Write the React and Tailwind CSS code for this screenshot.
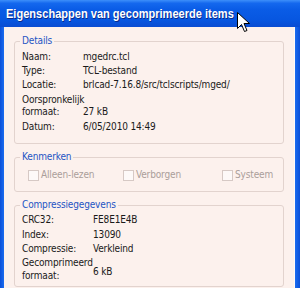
export default function App() {
  const font = { fontFamily: '"DejaVu Sans Condensed", "Liberation Sans", Arial, sans-serif' };
  const titleFont = { fontFamily: '"Liberation Sans", Arial, sans-serif' };
  return (
    <div className="relative w-[300px] h-[288px] overflow-hidden bg-[#0a5ce6]" style={font}>
      {/* Title bar */}
      <div className="h-[27px] flex items-center pl-[6px] bg-[linear-gradient(180deg,#3d8ffa_0%,#1468ee_12%,#0a5ce6_35%,#0756e0_75%,#0a4cd2_100%)]">
        <span className="origin-left scale-x-[0.85] text-white font-bold text-[13px] [text-shadow:1px_1px_0_#0a2a8a] whitespace-nowrap" style={titleFont}>
          Eigenschappen van gecomprimeerde items
        </span>
      </div>
      {/* Body */}
      <div className="flex h-[261px]">
        <div className="w-[4px] bg-[linear-gradient(90deg,#0a4fd8,#1a6cf0)]" />
        <div className="flex-1 bg-[#fcf1ed] pl-[10px] pr-[10px] pt-[14px] flex flex-col text-[10px] tracking-[-0.15px] text-[#1a1a1a] leading-[14px]">
          {/* Details */}
          <div className="relative border border-[#e2d3ce] rounded-[3px] h-[103px] pt-[8px] pl-[7px] flex flex-col">
            <span className="absolute left-[5px] top-[-8px] px-[2px] bg-[#fcf1ed] text-[#2454c4]">Details</span>
            <div className="flex h-[14px]"><span className="w-[61px]">Naam:</span><span>mgedrc.tcl</span></div>
            <div className="flex h-[14px]"><span className="w-[61px]">Type:</span><span>TCL-bestand</span></div>
            <div className="flex h-[14px]"><span className="w-[61px]">Locatie:</span><span className="whitespace-nowrap">brlcad-7.16.8/src/tclscripts/mged/</span></div>
            <div className="flex mt-[2px] h-[23px] items-end">
              <span className="w-[61px] leading-[11.5px]">Oorspronkelijk<br />formaat:</span>
              <span className="leading-[11.5px]">27 kB</span>
            </div>
            <div className="flex h-[14px] mt-[3px]"><span className="w-[61px]">Datum:</span><span>6/05/2010 14:49</span></div>
          </div>
          {/* Kenmerken */}
          <div className="relative mt-[13px] border border-[#e2d3ce] rounded-[3px] h-[35px] flex items-center pl-[13px] text-[#aa9e9a]">
            <span className="absolute left-[5px] top-[-8px] px-[2px] bg-[#fcf1ed] text-[#2454c4]">Kenmerken</span>
            <div className="flex items-center w-[95px] mt-[1px]">
              <span className="w-[11px] h-[11px] border border-[#d6c9c5] bg-[#fdf9f8] mr-[2px]" />
              <span>Alleen-lezen</span>
            </div>
            <div className="flex items-center w-[99px] mt-[1px]">
              <span className="w-[11px] h-[11px] border border-[#d6c9c5] bg-[#fdf9f8] mr-[2px]" />
              <span>Verborgen</span>
            </div>
            <div className="flex items-center mt-[1px]">
              <span className="w-[11px] h-[11px] border border-[#d6c9c5] bg-[#fdf9f8] mr-[2px]" />
              <span>Systeem</span>
            </div>
          </div>
          {/* Compressiegegevens */}
          <div className="relative mt-[13px] border border-[#e2d3ce] rounded-[3px] h-[82px] pt-[7px] pl-[7px] flex flex-col">
            <span className="absolute left-[5px] top-[-8px] px-[2px] bg-[#fcf1ed] text-[#2454c4]">Compressiegegevens</span>
            <div className="flex h-[14px]"><span className="w-[71px]">CRC32:</span><span>FE8E1E4B</span></div>
            <div className="flex h-[14px] mt-[1px]"><span className="w-[71px]">Index:</span><span>13090</span></div>
            <div className="flex h-[14px]"><span className="w-[71px]">Compressie:</span><span>Verkleind</span></div>
            <div className="flex h-[26px] items-center">
              <span className="w-[71px] leading-[13px]">Gecomprimeerd<br />formaat:</span>
              <span className="mt-[5px]">6 kB</span>
            </div>
          </div>
        </div>
        <div className="w-[1px] bg-[#fffaf8]" />
        <div className="w-[5px] bg-[linear-gradient(90deg,#1a6cf0,#0a4fd8)]" />
      </div>
      {/* Mouse cursor */}
      <svg className="absolute left-[237px] top-[12px]" width="13" height="21" viewBox="0 0 13 21">
        <path d="M0.5 0.5 L0.5 16.5 L4.5 12.5 L7.5 19.5 L10 18.5 L7 11.5 L12.5 11.5 Z" fill="#ffffff" stroke="#000000" strokeWidth="1" strokeLinejoin="miter" />
      </svg>
    </div>
  );
}
